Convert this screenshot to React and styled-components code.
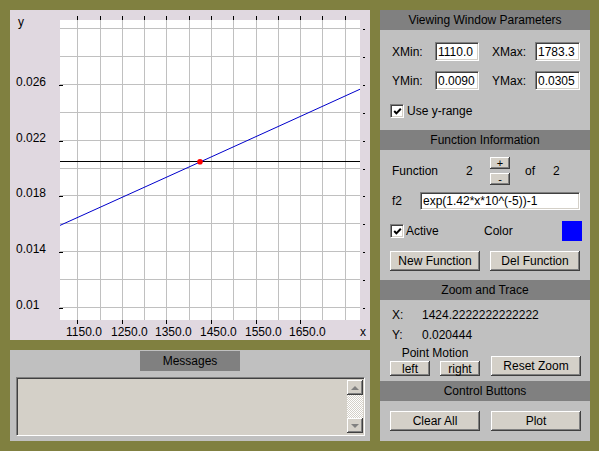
import React from 'react';
import styled, { createGlobalStyle } from 'styled-components';

const XMIN = 1110.0;
const XMAX = 1783.3333;
const YMIN = 0.009;
const YMAX = 0.0305;

const px = (x) => 50 + ((x - XMIN) / (XMAX - XMIN)) * 300;
const py = (y) => 311.5 - ((y - YMIN) / (YMAX - YMIN)) * 300;
const snap = (v) => Math.floor(v) + 0.5;

const GlobalStyle = createGlobalStyle`
  html, body {
    margin: 0;
    padding: 0;
    background: #808040;
  }
  body {
    font-family: "Liberation Sans", Arial, sans-serif;
    font-size: 12px;
    color: #000;
  }
`;

const Frame = styled.div`
  width: 599px;
  height: 451px;
  box-sizing: border-box;
  padding: 10px 9px 10px 10px;
  display: flex;
  gap: 10px;
  background: #808040;
`;

const LeftColumn = styled.div`
  width: 360px;
  display: flex;
  flex-direction: column;
  gap: 10px;
`;

const PlotPanel = styled.div`
  width: 360px;
  height: 330px;
  background: #e0d8e0;
  svg {
    display: block;
  }
`;

const MessagesPanel = styled.div`
  height: 91px;
  background: #c0c0c0;
  display: flex;
  flex-direction: column;
  align-items: center;
  padding-top: 1px;
  box-sizing: border-box;
`;

const Tab = styled.div`
  width: 100px;
  height: 20px;
  line-height: 20px;
  background: #808080;
  text-align: center;
`;

const sunken = `
  border: 1px solid;
  border-color: #808080 #ffffff #ffffff #808080;
  box-shadow: inset 1px 1px #404040, inset -1px -1px #d4d0c8;
  box-sizing: border-box;
`;

const MessageBox = styled.div`
  ${sunken}
  margin-top: 6px;
  width: 349px;
  height: 59px;
  background: #d4d0c8;
  display: flex;
  justify-content: flex-end;
  padding: 2px 1px 2px 2px;
`;

const ScrollBar = styled.div`
  width: 16px;
  display: flex;
  flex-direction: column;
  background: repeating-conic-gradient(#d4d0c8 0 25%, #ffffff 0 50%) 0 0 / 2px 2px;
`;

const ScrollButton = styled.div`
  width: 16px;
  height: 15px;
  background: #d4d0c8;
  box-shadow: inset -1px -1px #404040, inset 1px 1px #ffffff, inset -2px -2px #808080;
  display: flex;
  align-items: center;
  justify-content: center;
  &::after {
    content: '';
    width: 0;
    height: 0;
    border-left: 4px solid transparent;
    border-right: 4px solid transparent;
    ${(p) => (p.$down ? 'border-top: 4px solid #808080;' : 'border-bottom: 4px solid #808080;')}
  }
`;

const Track = styled.div`
  flex: 1;
`;

const SidePanel = styled.div`
  width: 210px;
  background: #c0c0c0;
  display: flex;
  flex-direction: column;
`;

const SectionHeader = styled.div`
  height: 20px;
  line-height: 20px;
  background: #808080;
  text-align: center;
`;

const SectionBody = styled.div`
  height: ${(p) => p.$h}px;
  padding: 0 10px;
  box-sizing: border-box;
  display: flex;
  flex-direction: column;
`;

const Row = styled.div`
  display: flex;
  align-items: ${(p) => p.$align || 'center'};
  height: ${(p) => p.$h}px;
  margin-top: ${(p) => p.$mt || 0}px;
  flex: none;
`;

const Label = styled.span`
  flex: none;
  width: ${(p) => (p.$w ? `${p.$w}px` : 'auto')};
  margin-left: ${(p) => p.$ml || 0}px;
  white-space: nowrap;
`;

const Field = styled.input`
  ${sunken}
  flex: none;
  width: ${(p) => p.$w}px;
  height: ${(p) => p.$h}px;
  margin: 0;
  padding: 0 2px;
  background: #ffffff;
  font-family: "Liberation Sans", Arial, sans-serif;
  font-size: 12px;
  color: #000;
  outline: none;
`;

const Button = styled.button`
  flex: none;
  width: ${(p) => p.$w}px;
  height: ${(p) => p.$h}px;
  margin: 0 0 0 ${(p) => p.$ml || 0}px;
  padding: 0;
  border: none;
  background: #d4d0c8;
  box-shadow: inset -1px -1px #404040, inset 1px 1px #ffffff, inset -2px -2px #808080;
  font-family: "Liberation Sans", Arial, sans-serif;
  font-size: ${(p) => p.$fs || 12}px;
  line-height: 1;
  color: #000;
`;

const Stepper = styled.div`
  flex: none;
  display: flex;
  flex-direction: column;
  gap: 4px;
`;

const CheckBox = styled.span`
  ${sunken}
  flex: none;
  width: 14px;
  height: 14px;
  background: #ffffff;
  display: flex;
  align-items: center;
  justify-content: center;
`;

const Swatch = styled.span`
  flex: none;
  width: 20px;
  height: 20px;
  background: ${(p) => p.$color};
`;

const MotionGroup = styled.div`
  flex: none;
  width: 90px;
  display: flex;
  flex-direction: column;
  align-items: center;
`;

const MotionTitle = styled.div`
  height: 15px;
  line-height: 15px;
`;

const MotionButtons = styled.div`
  display: flex;
  width: 90px;
`;

const Check = () => (
  <CheckBox>
    <svg width="9" height="9" viewBox="0 0 9 9">
      <polyline points="1.2,4 3.4,6.4 7.8,1.8" fill="none" stroke="#000" strokeWidth="2" />
    </svg>
  </CheckBox>
);

const Plot = () => {
  const vx = [];
  for (let x = 1150; x <= 1750; x += 50) vx.push(x);
  const hy = [];
  for (let i = 0; i <= 10; i++) hy.push(0.01 + i * 0.002);
  const yLabels = [
    [0.026, '0.026'],
    [0.022, '0.022'],
    [0.018, '0.018'],
    [0.014, '0.014'],
    [0.01, '0.01'],
  ];
  const xLabels = [1150, 1250, 1350, 1450, 1550, 1650];

  const pts = [];
  for (let i = 0; i <= 60; i++) {
    const x = XMIN + ((XMAX - XMIN) * i) / 60;
    const y = Math.exp(1.42 * x * 1e-5) - 1;
    pts.push(`${px(x).toFixed(2)},${py(y).toFixed(2)}`);
  }
  const traceX = 1424.2222222222222;
  const traceY = 0.020444;

  return (
    <svg width="360" height="330" fontFamily='"Liberation Sans", Arial, sans-serif' fontSize="12">
      <rect x="50" y="10" width="300" height="300" fill="#ffffff" />
      <g stroke="#c0c0c0" strokeWidth="1" shapeRendering="crispEdges">
        {vx.map((x) => (
          <line key={x} x1={snap(px(x))} x2={snap(px(x))} y1="10" y2="310" />
        ))}
        {hy.map((y) => (
          <line key={y} x1="50" x2="350" y1={snap(py(y))} y2={snap(py(y))} />
        ))}
      </g>
      <g stroke="#000" strokeWidth="1" shapeRendering="crispEdges">
        {vx.map((x) => (
          <line key={`t${x}`} x1={snap(px(x))} x2={snap(px(x))} y1="6" y2="10" />
        ))}
        {xLabels.map((x) => (
          <line key={`b${x}`} x1={snap(px(x))} x2={snap(px(x))} y1="310" y2="314" />
        ))}
        {yLabels.map(([y]) => (
          <line key={`l${y}`} x1="49" x2="53" y1={snap(py(y)) + 1} y2={snap(py(y)) + 1} />
        ))}
        {hy.map((y) => (
          <line key={`r${y}`} x1="353" x2="355" y1={snap(py(y)) + 1} y2={snap(py(y)) + 1} />
        ))}
      </g>
      <line
        x1="50"
        x2="350"
        y1={snap(py(traceY))}
        y2={snap(py(traceY))}
        stroke="#000"
        shapeRendering="crispEdges"
      />
      <polyline points={pts.join(' ')} fill="none" stroke="#0000cc" strokeWidth="1" />
      <circle cx={px(traceX)} cy={py(traceY)} r="2.8" fill="#ff0000" />
      <text x="8" y="16">y</text>
      {yLabels.map(([y, t]) => (
        <text key={t} x="6" y={Math.floor(py(y)) + 2}>
          {t}
        </text>
      ))}
      {xLabels.map((x) => (
        <text key={x} x={Math.floor(px(x)) - 11} y="326">
          {x.toFixed(1)}
        </text>
      ))}
      <text x="350" y="326">x</text>
    </svg>
  );
};

export default function App() {
  return (
    <>
      <GlobalStyle />
      <Frame>
        <LeftColumn>
          <PlotPanel>
            <Plot />
          </PlotPanel>
          <MessagesPanel>
            <Tab>Messages</Tab>
            <MessageBox>
              <ScrollBar>
                <ScrollButton />
                <Track />
                <ScrollButton $down />
              </ScrollBar>
            </MessageBox>
          </MessagesPanel>
        </LeftColumn>

        <SidePanel>
          <SectionHeader>Viewing Window Parameters</SectionHeader>
          <SectionBody $h={100}>
            <Row $h={19} $mt={12}>
              <Label $ml={2} $w={43}>XMin:</Label>
              <Field $w={44} $h={19} defaultValue="1110.0" />
              <Label $ml={13} $w={43}>XMax:</Label>
              <Field $w={45} $h={19} defaultValue="1783.3" />
            </Row>
            <Row $h={19} $mt={10}>
              <Label $ml={2} $w={43}>YMin:</Label>
              <Field $w={44} $h={19} defaultValue="0.0090" />
              <Label $ml={13} $w={43}>YMax:</Label>
              <Field $w={45} $h={19} defaultValue="0.0305" />
            </Row>
            <Row $h={14} $mt={14}>
              <Check />
              <Label $ml={3}>Use y-range</Label>
            </Row>
          </SectionBody>

          <SectionHeader>Function Information</SectionHeader>
          <SectionBody $h={130}>
            <Row $h={28} $mt={7}>
              <Label $ml={2} $w={74}>Function</Label>
              <Label $w={24}>2</Label>
              <Stepper>
                <Button $w={20} $h={12} $fs={11}>+</Button>
                <Button $w={20} $h={12} $fs={11}>-</Button>
              </Stepper>
              <Label $ml={15} $w={28}>of</Label>
              <Label>2</Label>
            </Row>
            <Row $h={18} $mt={7}>
              <Label $ml={2} $w={28}>f2</Label>
              <Field $w={160} $h={18} defaultValue="exp(1.42*x*10^(-5))-1" />
            </Row>
            <Row $h={20} $mt={11}>
              <Check />
              <Label $ml={2} $w={78}>Active</Label>
              <Label $w={78}>Color</Label>
              <Swatch $color="#0000ff" />
            </Row>
            <Row $h={20} $mt={10}>
              <Button $w={90} $h={20}>New Function</Button>
              <Button $w={90} $h={20} $ml={10}>Del Function</Button>
            </Row>
          </SectionBody>

          <SectionHeader>Zoom and Trace</SectionHeader>
          <SectionBody $h={81}>
            <Row $h={14} $mt={8}>
              <Label $ml={2} $w={30}>X:</Label>
              <Label>1424.2222222222222</Label>
            </Row>
            <Row $h={14} $mt={6}>
              <Label $ml={2} $w={30}>Y:</Label>
              <Label>0.020444</Label>
            </Row>
            <Row $h={30} $mt={4} $align="flex-end">
              <MotionGroup>
                <MotionTitle>Point Motion</MotionTitle>
                <MotionButtons>
                  <Button $w={40} $h={15}>left</Button>
                  <Button $w={40} $h={15} $ml={10}>right</Button>
                </MotionButtons>
              </MotionGroup>
              <Button $w={90} $h={20} $ml={11}>Reset Zoom</Button>
            </Row>
          </SectionBody>

          <SectionHeader>Control Buttons</SectionHeader>
          <SectionBody $h={40}>
            <Row $h={20} $mt={10}>
              <Button $w={90} $h={20}>Clear All</Button>
              <Button $w={90} $h={20} $ml={11}>Plot</Button>
            </Row>
          </SectionBody>
        </SidePanel>
      </Frame>
    </>
  );
}
